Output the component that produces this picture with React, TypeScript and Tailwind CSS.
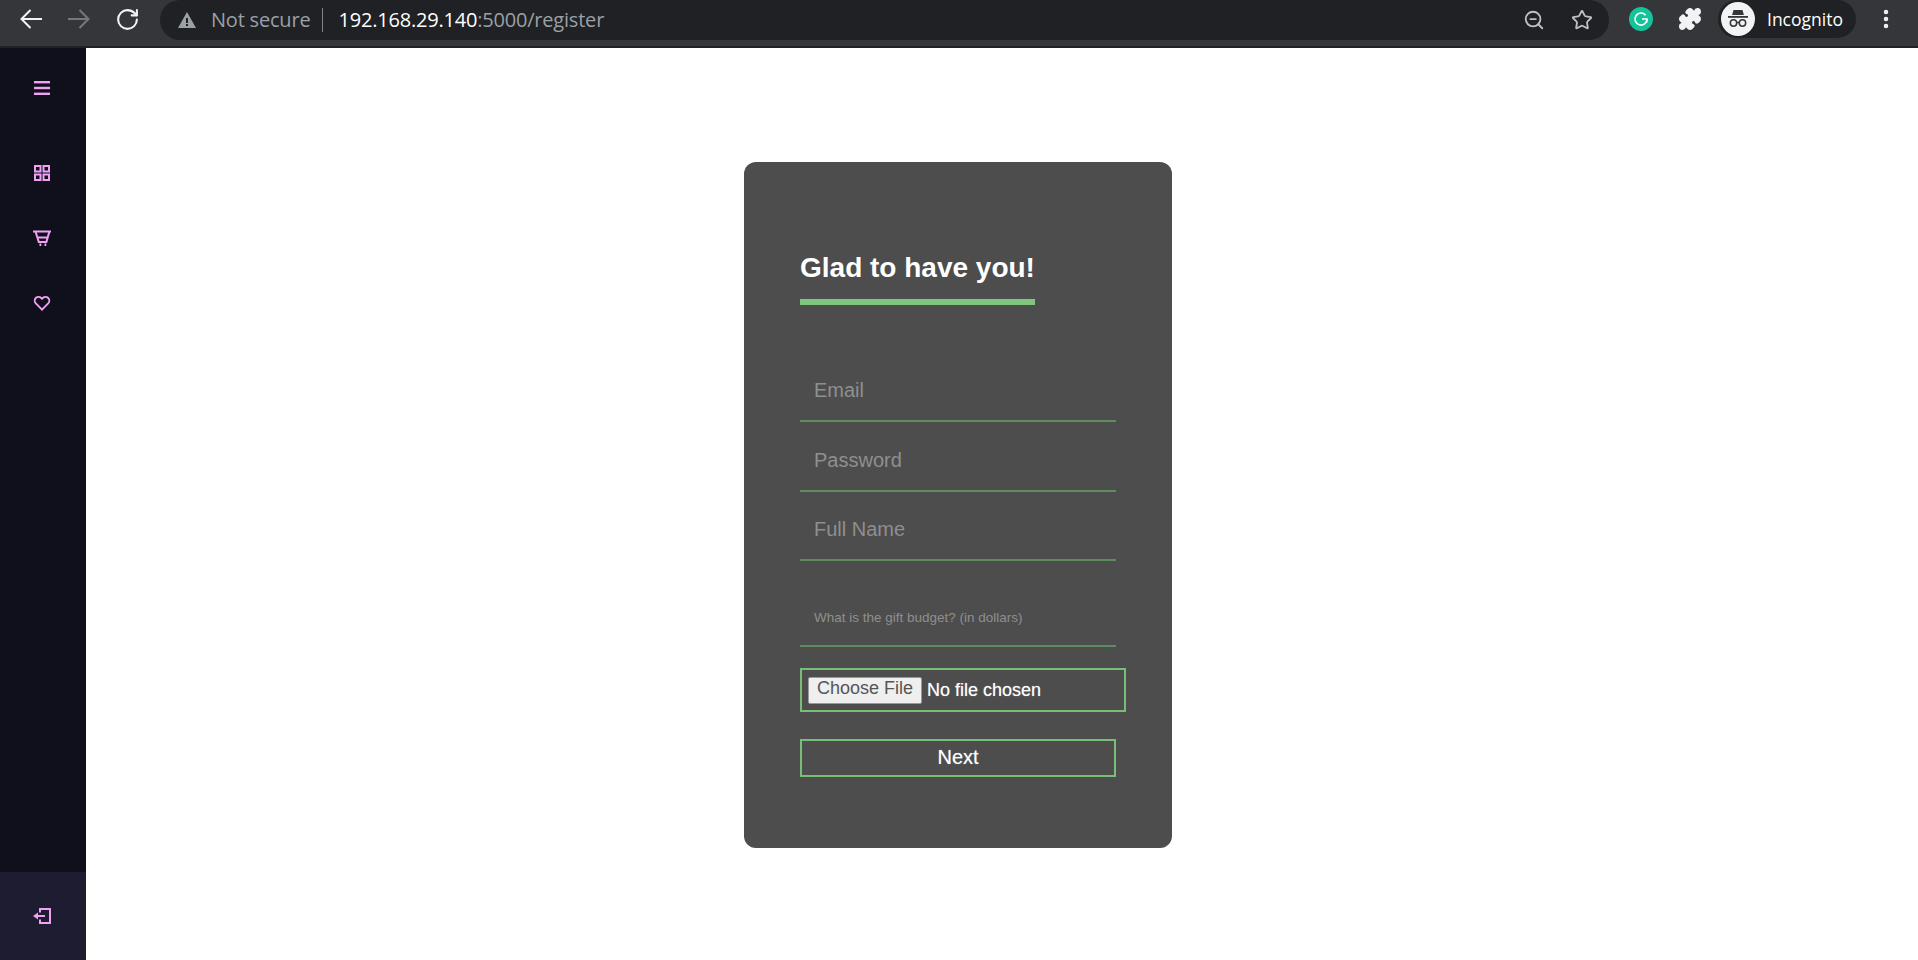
import { EllipsisVertical, Puzzle, RotateCw, Star, ZoomOut } from 'lucide-react'

const UNDERLINE_INPUT =
  'block w-[316px] h-[60px] bg-transparent border-0 border-b-2 border-[#5f8c5f] pl-[14px] pb-[2px] text-[20px] text-white outline-none placeholder:text-[#8f8f8f]'

function ChromeArrow({ color, flip }: { color: string; flip?: boolean }) {
  return (
    <svg className={flip ? 'rotate-180' : ''} width="24" height="24" viewBox="0 0 24 24" fill="none" stroke={color} strokeWidth="2">
      <path d="M23 12H3.5" />
      <path d="M11.5 3 2.5 12l9 9" />
    </svg>
  )
}

function IncognitoBadge() {
  return (
    <div className="w-[34px] h-[34px] rounded-full bg-[#f1f3f4] flex items-center justify-center">
      <svg width="24" height="24" viewBox="0 0 24 24" fill="none">
        <path d="M7.5 3h9l1.4 5H6.1z" fill="#35363a" />
        <rect x="2" y="9" width="20" height="1.8" fill="#35363a" />
        <circle cx="7.5" cy="16" r="3.2" stroke="#35363a" strokeWidth="1.5" />
        <circle cx="16.5" cy="16" r="3.2" stroke="#35363a" strokeWidth="1.5" />
        <path d="M10.7 15.5h2.6" stroke="#35363a" strokeWidth="1.5" />
      </svg>
    </div>
  )
}

function Toolbar() {
  return (
    <header className="h-[48px] bg-[#35363a] border-b-2 border-[#202124] flex items-start font-['Open_Sans',sans-serif]">
      <div className="w-[160px] h-[38px] flex items-center pl-[19px] gap-[24px] shrink-0">
        <ChromeArrow color="#f1f3f4" />
        <ChromeArrow color="#77787b" flip />
        <RotateCw size={25} stroke="#f1f3f4" strokeWidth={2} />
      </div>
      <div className="w-[1449px] h-[40px] bg-[#202124] rounded-[20px] flex items-center pl-[17px] pr-[16px] shrink-0">
        <svg width="20" height="20" viewBox="0 0 20 20">
          <path d="M10 2 19 18H1z" fill="#9aa0a6" />
          <rect x="9" y="8" width="2" height="5" fill="#202124" />
          <rect x="9" y="14" width="2" height="2" fill="#202124" />
        </svg>
        <span className="ml-[14px] text-[20px] text-[#9aa0a6] tracking-[-0.2px]">Not secure</span>
        <span className="ml-[12px] w-px h-[24px] bg-[#80868b]" />
        <span className="ml-[15px] text-[20px] text-white tracking-[-0.2px]">192.168.29.140</span>
        <span className="text-[20px] text-[#9aa0a6] tracking-[-0.2px]">:5000/register</span>
        <div className="ml-auto flex items-center gap-[26px]">
          <ZoomOut size={22} stroke="#bdc1c6" strokeWidth={2} />
          <Star size={22} stroke="#bdc1c6" strokeWidth={2} />
        </div>
      </div>
      <div className="flex items-center h-[38px] ml-[20px]">
        <div className="w-[24px] h-[24px] rounded-full bg-[#15c39a] flex items-center justify-center">
          <svg width="16" height="16" viewBox="0 0 16 16" fill="none" stroke="#fff" strokeWidth="1.6">
            <path d="M12.6 4.2A6 6 0 1 0 14 8H9" />
            <path d="M13.8 8v3.5" />
          </svg>
        </div>
        <Puzzle size={24} className="ml-[25px]" fill="#f1f3f4" stroke="#f1f3f4" />
        <div className="ml-[16px] w-[138px] h-[38px] rounded-full bg-[#202124] flex items-center pl-[3px]">
          <IncognitoBadge />
          <span className="ml-[12px] text-[17.5px] text-white">Incognito</span>
        </div>
        <EllipsisVertical size={24} className="ml-[18px]" stroke="#f1f3f4" strokeWidth={2.5} />
      </div>
    </header>
  )
}

function Sidebar() {
  return (
    <aside className="w-[86px] shrink-0 bg-[#10101c] flex flex-col items-center">
      <div className="flex flex-col items-center pr-[2px]">
        <svg className="mt-[32px]" width="18" height="16" viewBox="0 0 18 16" fill="#f0a0f5">
          <rect x="1" y="1" width="16" height="2.4" />
          <rect x="1" y="6.8" width="16" height="2.4" />
          <rect x="1" y="12.6" width="16" height="2.4" />
        </svg>
        <svg className="mt-[69px]" width="16" height="16" viewBox="0 0 16 16" fill="none" stroke="#f0a0f5" strokeWidth="2">
          <rect x="1" y="1" width="5.5" height="5.5" />
          <rect x="9.5" y="1" width="5.5" height="5.5" />
          <rect x="1" y="9.5" width="5.5" height="5.5" />
          <rect x="9.5" y="9.5" width="5.5" height="5.5" />
        </svg>
        <svg className="mt-[49px]" width="18" height="16" viewBox="0 0 18 16" fill="none" stroke="#f0a0f5" strokeWidth="2">
          <path d="M0 1.5h18" />
          <path d="M2.5 1.5 5.8 12h7.6l3-10.5" />
          <path d="M4.2 7.5h10.4" />
          <path d="M6.5 14.8h1.8M11.5 14.8h1.8" strokeWidth="2.4" />
        </svg>
        <svg className="mt-[49px]" width="18" height="16" viewBox="0 0 24 22" fill="none" stroke="#f0a0f5" strokeWidth="2.6">
          <path d="M12 20 3.5 11.5a5.2 5.2 0 0 1 7.4-7.4L12 5.2l1.1-1.1a5.2 5.2 0 0 1 7.4 7.4z" />
        </svg>
      </div>
      <div className="mt-auto w-full h-[88px] bg-[#1e1c30] flex items-center justify-center pr-[2px]">
        <svg width="18" height="16" viewBox="0 0 18 16" fill="none" stroke="#f0a0f5" strokeWidth="2">
          <path d="M7 4.5V1h10v14H7v-3.5" />
          <path d="M12 8H4" />
          <path d="M5 4.5 0 8l5 3.5z" fill="#f0a0f5" stroke="none" />
        </svg>
      </div>
    </aside>
  )
}

function RegisterCard() {
  return (
    <form className="w-[428px] h-[686px] mt-[114px] rounded-[12px] bg-[#4d4d4d] pl-[56px] pt-[87px] font-['Liberation_Sans',sans-serif]">
      <h2 className="inline-block text-[28px] font-bold text-white leading-[38px] border-b-[6px] border-[#7fc77f] pb-[12px]">
        Glad to have you!
      </h2>
      <input className={`${UNDERLINE_INPUT} mt-[57px]`} placeholder="Email" />
      <input className={`${UNDERLINE_INPUT} mt-[10px]`} placeholder="Password" />
      <input className={`${UNDERLINE_INPUT} mt-[9px]`} placeholder="Full Name" />
      <input
        className={`${UNDERLINE_INPUT} mt-[26px] placeholder:text-[13.5px]`}
        placeholder="What is the gift budget? (in dollars)"
      />
      <input
        type="file"
        className="block w-[326px] h-[44px] mt-[21px] border-2 border-[#78bd78] px-[6px] pt-[7px] text-[18px] text-white [text-shadow:0_0_1px_rgba(255,255,255,0.5)] file:h-[27px] file:align-top file:bg-[#efefef] file:text-[#555] file:border file:border-[#999] file:rounded-[2px] file:px-[8px] file:pb-[6px] file:leading-[14px] file:mr-[5px] file:font-normal file:[text-shadow:none]"
      />
      <button
        type="button"
        className="block w-[316px] h-[38px] mt-[27px] border-2 border-[#78bd78] text-[20px] text-white leading-[30px] pb-[2px] [text-shadow:0_0_1px_rgba(255,255,255,0.5)]"
      >
        Next
      </button>
    </form>
  )
}

export default function App() {
  return (
    <div className="w-[1918px] h-[960px] flex flex-col bg-white overflow-hidden">
      <Toolbar />
      <div className="flex flex-1 min-h-0">
        <Sidebar />
        <main className="flex-1 flex justify-center items-start pr-[88px]">
          <RegisterCard />
        </main>
      </div>
    </div>
  )
}
